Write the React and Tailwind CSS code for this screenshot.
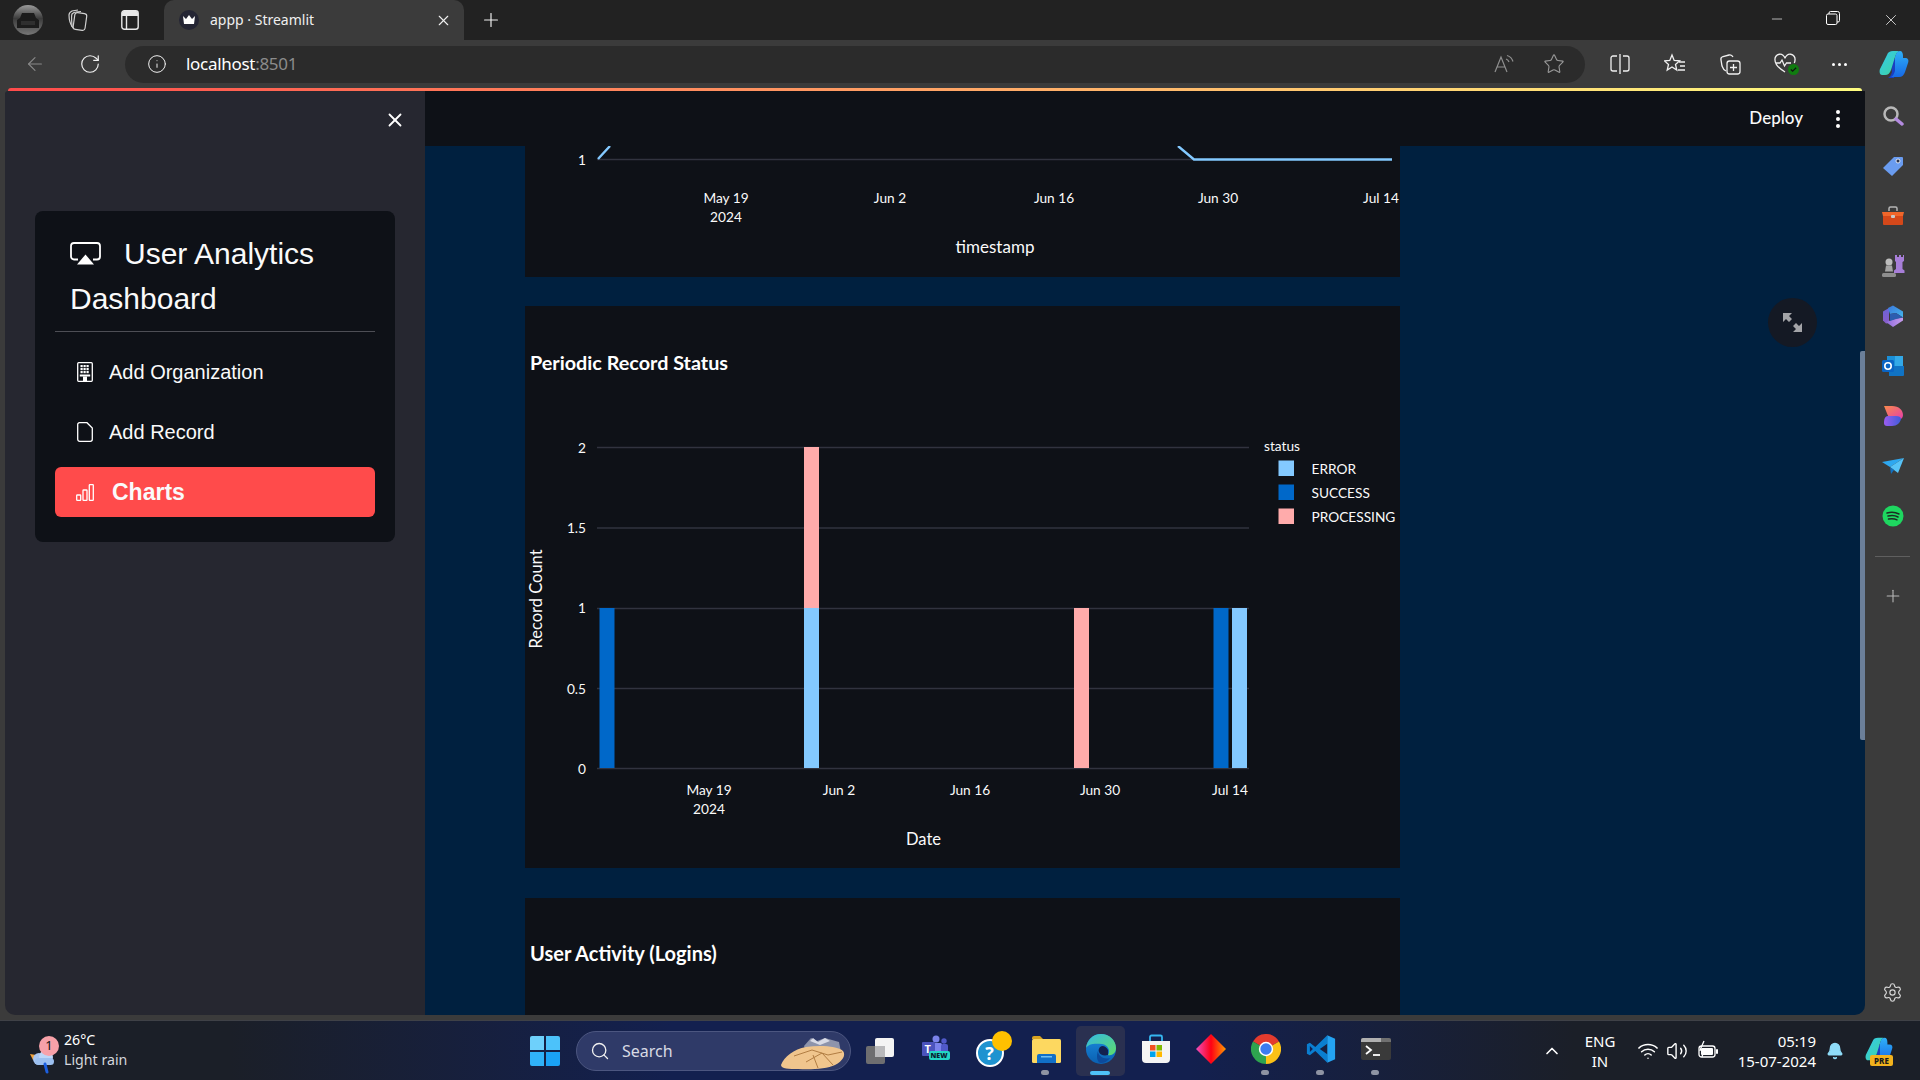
import React from "react";
import { ArrowLeft, RotateCw, Info, Star, X, Plus, Minus, Search, Settings, ChevronUp, Wifi, Volume2, Bell } from "lucide-react";

const S = ({ w = 24, h, vb = "0 0 24 24", children, className = "" }) => (
  <svg width={w} height={h || w} viewBox={vb} fill="none" className={`shrink-0 ${className}`}>{children}</svg>
);

const Airplay = () => (
  <S w={31} h={23} vb="0 0 31 23" className="inline-block align-[-1px]">
    <path d="M8 17.500H4a3 3 0 0 1-3-3V4a3 3 0 0 1 3-3h23a3 3 0 0 1 3 3v10.500a3 3 0 0 1-3 3h-4" stroke="#fff" strokeWidth="1.800" />
    <path d="M15.500 12.500L24 22.500H7Z" fill="#fff" />
  </S>
);
const Building = () => (
  <S w={16} h={20} vb="0 0 16 20">
    <rect x=".7" y=".7" width="14.600" height="18.600" rx="1" stroke="#fff" strokeWidth="1.300" />
    {[3.500, 6.500, 9.500].map((x) => [3, 6, 9].map((y) => <rect key={`${x}${y}`} x={x} y={y} width="2.200" height="2.200" fill="#fff" />))}
    <rect x="2.800" y="12.500" width="10.400" height="2" fill="#fff" />
    <rect x="6" y="14.500" width="4" height="5" fill="#fff" />
  </S>
);
const FileI = () => (
  <S w={16} h={20} vb="0 0 16 20">
    <path d="M2.500.7H10l5.300 5.300v11.300a2 2 0 0 1-2 2H2.700a2 2 0 0 1-2-2V2.500a1.800 1.800 0 0 1 1.800-1.800Z" stroke="#fff" strokeWidth="1.300" />
  </S>
);
const Bars = () => (
  <S w={18} h={17} vb="0 0 18 17">
    <rect x=".7" y="11" width="4" height="5.300" rx=".6" stroke="#fff" strokeWidth="1.300" />
    <rect x="7" y="6" width="4" height="10.300" rx=".6" stroke="#fff" strokeWidth="1.300" />
    <rect x="13.300" y=".7" width="4" height="15.600" rx=".6" stroke="#fff" strokeWidth="1.300" />
  </S>
);

const Copilot = ({ size = 30 }) => (
  <S w={size} vb="0 0 30 30">
    <defs>
      <linearGradient id="cpA" x1="0" y1="0" x2="1" y2="1"><stop offset="0" stopColor="#35c8ee" /><stop offset="1" stopColor="#3ed69a" /></linearGradient>
      <linearGradient id="cpB" x1="0" y1="0" x2="0" y2="1"><stop offset="0" stopColor="#2fb0f7" /><stop offset="1" stopColor="#1769e6" /></linearGradient>
    </defs>
    <path d="M11 10h9l-5 19H9c2-1 3-3 4-6Z" fill="#1a3fc0" />
    <path d="M8 6c1-3 3-4 6-4h6c-2 1-3 3-4 6l-4 13c-1 3-3 5-6 5H3C1 26 0 23 1 20Z" fill="url(#cpA)" />
    <path d="M16 8c1-3 2-6 5-6 2 0 3 2 3 5v2h2c3 0 4 2 3 5l-3 9c-1 3-3 5-6 5h-8c2-1 3-3 4-6Z" fill="url(#cpB)" />
  </S>
);

/* ---------- right rail icons ---------- */
const Tag = () => (
  <S w={22} vb="0 0 22 22">
    <path d="M1 13L12 2h8a1 1 0 0 1 1 1v7L10 21Z" fill="#6a9cf0" />
    <circle cx="16" cy="6" r="2" fill="#2a3550" stroke="#fff" strokeWidth=".8" />
  </S>
);
const Toolbox = () => (
  <S w={22} vb="0 0 22 22">
    <path d="M7 6V3.500A1.500 1.500 0 0 1 8.500 2h5A1.500 1.500 0 0 1 15 3.500V6" stroke="#b5b5b5" strokeWidth="1.500" />
    <path d="M0 7h22l-1 4H1Z" fill="#f0662a" />
    <path d="M1 11h20v8a1 1 0 0 1-1 1H2a1 1 0 0 1-1-1Z" fill="#d4481a" />
    <rect x="9" y="10" width="4" height="3" rx="1" fill="#c9c9c9" />
  </S>
);
const Chess = () => (
  <S w={24} vb="0 0 24 24">
    <circle cx="8" cy="8" r="3.500" fill="#bdbdbd" />
    <path d="M5 11.500h6l1 6H4Z" fill="#a5a5a5" />
    <rect x="1" y="19" width="14" height="4" rx="1.500" fill="#8e8e8e" />
    <path d="M14 1h2v2h2V1h2v2h2V1h1v6l-1.500 1v7l2 1.500V19H13v-2.500l2-1.500V8l-1-1Z" fill="#a77ed8" />
  </S>
);
const M365 = () => (
  <S w={22} vb="0 0 22 22">
    <defs>
      <linearGradient id="m1" x1="0" y1="0" x2="0" y2="1"><stop offset="0" stopColor="#6a63d8" /><stop offset="1" stopColor="#8a5cc8" /></linearGradient>
      <linearGradient id="m2" x1="0" y1="0" x2="1" y2="1"><stop offset="0" stopColor="#3a78dc" /><stop offset="1" stopColor="#45b6ec" /></linearGradient>
      <linearGradient id="m3" x1="0" y1="0" x2="1" y2="0"><stop offset="0" stopColor="#8d6bdc" /><stop offset="1" stopColor="#c79cec" /></linearGradient>
    </defs>
    <path d="M1 6.500L7 3v15l-3 0.500-3-3Z" fill="url(#m1)" />
    <path d="M6 3l5-2.500L21 6.500v6L14 8 8 9Z" fill="url(#m2)" />
    <path d="M4 17l10-3.500 7-1v3l-10 6.500Z" fill="url(#m3)" />
    <path d="M8 9l6-1 7 4.500-7 1.500-6 2Z" fill="#2c5db0" />
  </S>
);
const Outlook = () => (
  <S w={22} vb="0 0 22 22">
    <rect x="5" y="1" width="16" height="10" fill="#1a8fd8" />
    <rect x="13" y="1" width="8" height="10" fill="#33a9e8" />
    <path d="M7 11h15v9a1 1 0 0 1-1 1H7Z" fill="#1073c4" />
    <rect x="0" y="5" width="12" height="12" rx="1.500" fill="#0a64c4" />
    <circle cx="6" cy="11" r="3.200" stroke="#fff" strokeWidth="1.600" />
  </S>
);
const Designer = () => (
  <S w={22} vb="0 0 22 22">
    <defs>
      <linearGradient id="d1" x1="0" y1="0" x2="1" y2="1"><stop offset="0" stopColor="#f98a4b" /><stop offset="1" stopColor="#e63fa8" /></linearGradient>
      <linearGradient id="d2" x1="0" y1="0" x2="1" y2="0"><stop offset="0" stopColor="#9b5cf0" /><stop offset="1" stopColor="#3f5cd8" /></linearGradient>
    </defs>
    <path d="M2 1h8c7 0 11 4 11 9 0 2-1 3-2 4H10C6 14 4 5 2 1Z" fill="url(#d1)" />
    <path d="M6 11h8c3 0 5 1 5 3-1 4-4 7-9 7H5c-2 0-3-1-3-3 0-4 1-7 4-7Z" fill="url(#d2)" />
  </S>
);
const Plane = () => (
  <S w={22} vb="0 0 22 22">
    <path d="M0 7L22 3 8 12Z" fill="#2ea8f0" />
    <path d="M22 3L16 18 8 12Z" fill="#57c3f7" />
    <path d="M8 12l1 7 3-4Z" fill="#1170c0" />
  </S>
);
const Spotify = () => (
  <S w={22} vb="0 0 22 22">
    <circle cx="11" cy="11" r="10.500" fill="#1ed760" />
    <path d="M5 8c4-1 8-1 12 1M6 11c3-.8 7-.8 10 1M6.500 14c3-.6 6-.5 8.500 .8" stroke="#1c2b22" strokeWidth="1.500" strokeLinecap="round" />
  </S>
);
const RailSearch = () => (
  <S w={22} vb="0 0 22 22">
    <circle cx="9" cy="9" r="6.500" stroke="#b8b8b8" strokeWidth="2.500" />
    <path d="M14 14l6 5" stroke="#b48be0" strokeWidth="3.500" strokeLinecap="round" />
  </S>
);

/* ---------- taskbar icons ---------- */
const Teams = () => (
  <div className="relative h-[30px] w-[30px]">
    <S w={30} vb="0 0 30 30">
      <circle cx="15" cy="5" r="3.500" fill="#7b83eb" />
      <circle cx="23" cy="7" r="2.700" fill="#5059c9" />
      <rect x="12" y="9" width="9" height="15" rx="1.500" fill="#7b83eb" />
      <rect x="20" y="10" width="7" height="13" rx="2" fill="#5059c9" />
      <rect x="1" y="8" width="13" height="14" rx="1" fill="#4b53bc" />
    </S>
    <span className="absolute left-[4px] top-[8px] font-['Open_Sans',sans-serif] text-[11px] font-bold leading-[14px] text-white">T</span>
    <span className="absolute left-[8px] top-[17px] h-[9px] w-[21px] rounded-[2px] bg-[#23d4c4] text-center font-['Open_Sans',sans-serif] text-[7px] font-extrabold leading-[9px] text-[#0a2030]">NEW</span>
  </div>
);
const Help = () => (
  <div className="relative h-[30px] w-[30px]">
    <div className="absolute left-0 top-[5px] h-[28px] w-[28px] rounded-full border-[2px] border-white bg-[#1e93d0] text-center font-['Open_Sans',sans-serif] text-[18px] font-bold leading-[24px] text-white">?</div>
    <div className="absolute left-[16px] top-[-3px] h-[20px] w-[20px] rounded-full bg-[#ffc000]" />
  </div>
);
const Explorer = () => (
  <S w={30} vb="0 0 30 30">
    <path d="M1 4a2 2 0 0 1 2-2h6l3 3h-11Z" fill="#d9a321" />
    <rect x="1" y="5" width="29" height="24" rx="1.500" fill="#fdd860" />
    <path d="M6 29v-7a2 2 0 0 1 2-2h15a2 2 0 0 1 2 2v7Z" fill="#1170c8" />
    <rect x="10" y="22" width="11" height="1.500" fill="#6fc0f4" />
  </S>
);
const Edge = () => (
  <S w={30} vb="0 0 30 30">
    <defs>
      <linearGradient id="e1" x1="0" y1="0" x2="1" y2="1"><stop offset="0" stopColor="#35b8e4" /><stop offset="1" stopColor="#5fdc6a" /></linearGradient>
      <linearGradient id="e2" x1="0" y1="0" x2="0" y2="1"><stop offset="0" stopColor="#1a8ce0" /><stop offset="1" stopColor="#0a5fb0" /></linearGradient>
    </defs>
    <circle cx="15" cy="15" r="15" fill="url(#e2)" />
    <path d="M0 14C1 6 7 0 15 0c8 0 15 6 15 14 0 5-4 8-8 7 3-4 0-10-6-11C8 9 2 10 0 14Z" fill="url(#e1)" />
    <path d="M22 21c-4 1-8 0-9-3-1-2 0-5 3-6 3 0 5 2 6 4 0 1 0 3 0 5Z" fill="#13204f" />
    <path d="M12 17c0 5 6 9 12 7-2 3-6 5-9 5-4 0-5-7-3-12Z" fill="#0c4a9c" />
  </S>
);
const Store = () => (
  <S w={30} vb="0 0 30 30">
    <path d="M9 7V3a1.500 1.500 0 0 1 1.500-1.500h9A1.500 1.500 0 0 1 21 3v4" stroke="#35b6f0" strokeWidth="1.800" />
    <path d="M1 7h28v18a4 4 0 0 1-4 4H5a4 4 0 0 1-4-4Z" fill="#f4f4f4" />
    <rect x="9" y="11" width="5.500" height="5.500" fill="#f25022" />
    <rect x="15.500" y="11" width="5.500" height="5.500" fill="#7fba00" />
    <rect x="9" y="17.500" width="5.500" height="5.500" fill="#00a4ef" />
    <rect x="15.500" y="17.500" width="5.500" height="5.500" fill="#ffb900" />
  </S>
);
const Diamond = () => (
  <S w={30} vb="0 0 30 30">
    <defs>
      <linearGradient id="dm" x1="0" y1="0" x2="1" y2="0"><stop offset="0" stopColor="#f04fc0" /><stop offset=".5" stopColor="#ff0014" /><stop offset="1" stopColor="#ff9a00" /></linearGradient>
    </defs>
    <path d="M15 0L30 15 15 30 0 15Z" fill="url(#dm)" />
  </S>
);
const Chrome = () => (
  <S w={30} vb="0 0 30 30">
    <path d="M15 15L28 7.500A15 15 0 0 0 2 7.500Z" fill="#e33b2e" />
    <path d="M15 15L2 7.500A15 15 0 0 0 15 30Z" fill="#2ea44f" />
    <path d="M15 15L15 30A15 15 0 0 0 28 7.500Z" fill="#fbc116" />
    <circle cx="15" cy="15" r="7.200" fill="#fff" />
    <circle cx="15" cy="15" r="5.700" fill="#3b7cf0" />
  </S>
);
const VSCode = () => (
  <S w={30} vb="0 0 100 100">
    <path d="M71 4L31 43 13 29 3 34V66L13 71 31 57 71 96 72 68 46 50 72 32Z" fill="#0a7ed0" />
    <path d="M13 40L23 50 13 60Z" fill="#13204f" />
    <path d="M71 4L97 16V84L71 96Z" fill="#24a3f2" />
  </S>
);
const Terminal = () => (
  <S w={30} vb="0 0 30 30">
    <rect x="0" y="4" width="30" height="22" rx="2" fill="#3a3a3a" />
    <path d="M0 6a2 2 0 0 1 2-2h18v4H0Z" fill="#b0b0b0" />
    <path d="M20 4h8a2 2 0 0 1 2 2v2H20Z" fill="#707070" />
    <path d="M5 12l5 4-5 4" stroke="#fff" strokeWidth="1.800" />
    <path d="M12 21h7" stroke="#fff" strokeWidth="1.800" />
  </S>
);
const Battery = () => (
  <S w={22} vb="0 0 22 22">
    <rect x="2" y="6" width="16" height="11" rx="2.500" stroke="#fff" strokeWidth="1.300" />
    <rect x="4" y="8" width="12" height="7" rx="1" fill="#fff" />
    <rect x="19" y="9" width="2" height="5" rx="1" fill="#fff" />
    <path d="M7 1L3 10h4l-2 7" stroke="#fff" strokeWidth="1.300" />
  </S>
);

const Weather = () => (
  <S w={30} vb="0 0 30 30">
    <path d="M2 10l6 1-3 5Z" fill="#f0a23c" />
    <circle cx="11" cy="15" r="6" fill="#a8c6f2" />
    <circle cx="18" cy="13" r="7" fill="#bcd6f8" />
    <rect x="7" y="14" width="19" height="7" rx="3.500" fill="#9cc0f0" />
    <path d="M17 20l2 8" stroke="#1c5fe0" strokeWidth="3" strokeLinecap="round" />
  </S>
);
const HandPic = () => (
  <S w={68} h={38} vb="0 0 68 38" className="ml-auto">
    <path d="M24 14l7-8 6 3 8-3 7 2 7 2 2 10H26Z" fill="#8e94ab" />
    <path d="M30 9l3-3 5 4 7-4 5 3-10 4Z" fill="#d9dbe6" />
    <path d="M1 33c3-8 13-16 25-18 14-2 32-1 37 4 3 4 0 10-8 14-8 4-25 5-37 4C9 37 1 37 1 33Z" fill="#f0c58d" />
    <path d="M14 24l18-6 16 5 14-3M26 30l16-9 11 12M38 36l-5-13" stroke="#b17d43" strokeWidth="1" />
  </S>
);

const Slot = ({ dot, active, children }) => (
  <div className="relative flex h-[50px] w-[55px] items-center justify-center">
    {active && <div className="absolute left-[3px] top-0 h-[50px] w-[49px] rounded-[5px] bg-[#2a3050]" />}
    <div className="relative -mt-[4px]">{children}</div>
    {dot && <div className="absolute bottom-[1px] left-[23px] h-[5px] w-[8px] rounded-full bg-[#8f94a3]" />}
    {active && <div className="absolute bottom-[1px] left-[17px] h-[4px] w-[20px] rounded-full bg-[#4fc1f7]" />}
  </div>
);

/* ---------- charts ---------- */
const tick = { fill: "#fafafa", fontSize: 13.700 };

const TopChart = () => (
  <svg viewBox="525 146 875 131" className="block h-full w-full font-['Lato',sans-serif]">
    <path d="M597 159.500H1194" stroke="#31333f" strokeWidth="1.500" />
    <path d="M598 159L610 146M1178 146L1194 159.500H1392" stroke="#83c9ff" strokeWidth="2.400" fill="none" />
    <text x="586" y="165" textAnchor="end" {...tick}>1</text>
    {[["May 19", 726], ["Jun 2", 890], ["Jun 16", 1054], ["Jun 30", 1218], ["Jul 14", 1381]].map(([t, x]) => (
      <text key={t} x={x} y="203" textAnchor="middle" {...tick}>{t}</text>
    ))}
    <text x="726" y="222" textAnchor="middle" {...tick}>2024</text>
    <text x="995" y="253" textAnchor="middle" fill="#fafafa" fontSize="17">timestamp</text>
  </svg>
);

const StatusChart = () => (
  <svg viewBox="525 306 875 562" className="block h-full w-full font-['Lato',sans-serif]">
    <text x="530" y="370" fill="#fff" fontSize="19.800" fontWeight="700">Periodic Record Status</text>
    {[447.500, 528, 608.500, 688.500, 768.500].map((y) => (
      <path key={y} d={`M597 ${y}H1249`} stroke="#31333f" strokeWidth="1.500" />
    ))}
    {[["2", 448], ["1.5", 528], ["1", 608], ["0.5", 689], ["0", 769]].map(([t, y]) => (
      <text key={t} x="586" y={y + 5} textAnchor="end" {...tick}>{t}</text>
    ))}
    <rect x="599.500" y="608" width="15" height="160" fill="#0068c9" />
    <rect x="804" y="447" width="15" height="161" fill="#ffabab" />
    <rect x="804" y="608" width="15" height="160" fill="#83c9ff" />
    <rect x="1074" y="608" width="15" height="160" fill="#ffabab" />
    <rect x="1213.500" y="608" width="15" height="160" fill="#0068c9" />
    <rect x="1232" y="608" width="15" height="160" fill="#83c9ff" />
    {[["May 19", 709], ["Jun 2", 839], ["Jun 16", 970], ["Jun 30", 1100], ["Jul 14", 1230]].map(([t, x]) => (
      <text key={t} x={x} y="795" textAnchor="middle" {...tick}>{t}</text>
    ))}
    <text x="709" y="814" textAnchor="middle" {...tick}>2024</text>
    <text x="923.500" y="845" textAnchor="middle" fill="#fafafa" fontSize="16.500">Date</text>
    <text transform="translate(542 599) rotate(-90)" textAnchor="middle" fill="#fafafa" fontSize="16.500">Record Count</text>
    <text x="1264" y="451" {...tick}>status</text>
    {[["ERROR", 468, "#83c9ff"], ["SUCCESS", 492, "#0068c9"], ["PROCESSING", 516, "#ffabab"]].map(([t, y, c]) => (
      <g key={t}>
        <rect x="1278.500" y={y - 7.500} width="15.500" height="15.500" fill={c} />
        <text x="1311.500" y={y + 6} {...tick}>{t}</text>
      </g>
    ))}
  </svg>
);

const RailItem = ({ children }) => <div className="flex h-[50px] items-center justify-center">{children}</div>;

export default function App() {
  return (
    <div className="flex h-screen w-[1920px] flex-col overflow-hidden bg-[#3b3b3b] font-['Noto_Sans',sans-serif] text-white">
      {/* tab strip */}
      <div className="flex h-10 shrink-0 items-center bg-[#222222]">
        <div className="ml-[13px] h-[30px] w-[30px] overflow-hidden rounded-full bg-[linear-gradient(#9a9a9a,#3c3c3c_45%,#777)]">
          <S w={30} vb="0 0 30 30">
            <path d="M7 13l2-5h12l2 5 3 2v8H4v-8Z" fill="#1c1c1c" />
            <rect x="8" y="16" width="14" height="4" fill="#2f2f2f" />
          </S>
        </div>
        <S w={24} className="ml-[22px]" vb="0 0 24 24">
          <rect x="9" y="5" width="12" height="17" rx="2.500" stroke="#d0d0d0" strokeWidth="1.200" transform="rotate(8 15 13)" />
          <path d="M8 20C5 16 4 10 4 7c0-2 1-3 3-4l6-1" stroke="#d0d0d0" strokeWidth="1.200" />
          <path d="M7 19C7 15 6 9 7 6c1-1 2-2 4-2l5-.500" stroke="#d0d0d0" strokeWidth="1.200" />
        </S>
        <S w={18} h={20} vb="0 0 18 20" className="ml-[32px] mr-[3px]">
          <rect x=".8" y=".8" width="16.400" height="18.400" rx="2.500" stroke="#e8e8e8" strokeWidth="1.400" />
          <path d="M1 6h16V3a2 2 0 0 0-2-2H3a2 2 0 0 0-2 2Z" fill="#e8e8e8" />
          <path d="M5.500 6v13" stroke="#e8e8e8" strokeWidth="1.400" />
        </S>
        <div className="ml-[22px] flex h-10 w-[300px] items-center rounded-t-[10px] bg-[#3b3b3b] pl-[15px] pr-[12px]">
          <div className="flex h-[20px] w-[20px] items-center justify-center rounded-full bg-[#242534]">
            <S w={14} vb="0 0 14 14"><path d="M1 3l3 3 3-4 3 4 3-3-1 8H2Z" fill="#fff" /></S>
          </div>
          <span className="ml-[11px] text-[14px] leading-5 text-[#f0f0f0]">appp · Streamlit</span>
          <X size={17} strokeWidth={1.600} color="#f0f0f0" className="ml-auto" />
        </div>
        <Plus size={22} strokeWidth={1.300} color="#f0f0f0" className="ml-[16px]" />
        <div className="ml-auto flex">
          <div className="flex w-[56px] justify-center"><Minus size={16} strokeWidth={1} color="#fff" /></div>
          <div className="flex w-[56px] justify-center">
            <S w={14} vb="0 0 14 14"><rect x=".5" y="3" width="10.500" height="10.500" rx="1.500" stroke="#fff" /><path d="M3 3V2a1.500 1.500 0 0 1 1.500-1.500h7A2 2 0 0 1 13.500 2.500v7A1.500 1.500 0 0 1 12 11h-1" stroke="#fff" /></S>
          </div>
          <div className="flex w-[59px] justify-center"><X size={18} strokeWidth={1} color="#fff" /></div>
        </div>
      </div>

      {/* toolbar */}
      <div className="flex h-12 shrink-0 items-center bg-[#3b3b3b]">
        <ArrowLeft size={22} strokeWidth={1.200} color="#8a8a8a" className="ml-[24px]" />
        <RotateCw size={22} strokeWidth={1.300} color="#f0f0f0" className="ml-[33px]" />
        <div className="ml-[24px] flex h-[37px] w-[1460px] items-center rounded-full bg-[#2b2b2b] pl-[22px] pr-[20px]">
          <Info size={20} strokeWidth={1.200} color="#f0f0f0" />
          <span className="ml-[19px] text-[17px] leading-6 tracking-[-0.3px]">localhost<span className="text-[#8c8c8c]">:8501</span></span>
          <S w={22} className="ml-auto" vb="0 0 22 22">
            <path d="M2 19L8 4l6 15M4.500 14h7" stroke="#8f8f8f" strokeWidth="1.200" />
            <path d="M13 6a5 5 0 0 1 3 3M14 2.500a9 9 0 0 1 6 6" stroke="#8f8f8f" strokeWidth="1.200" />
          </S>
          <Star size={22} strokeWidth={1.200} color="#9a9a9a" className="ml-[28px]" />
        </div>
        <div className="ml-[7px] flex items-center">
          <div className="flex w-[55px] items-center justify-center">
            <S w={22} vb="0 0 22 22"><path d="M8 3H4a2 2 0 0 0-2 2v11a2 2 0 0 0 2 2h4M14 3h4a2 2 0 0 1 2 2v11a2 2 0 0 1-2 2h-4M11 1v20" stroke="#f0f0f0" strokeWidth="1.300" /></S>
          </div>
          <div className="flex w-[55px] items-center justify-center">
            <S w={22} vb="0 0 22 22"><path d="M8 2l2.200 5.500 5.300.4-4 3.500 1.300 5.600L8 14l-4.800 3 1.300-5.600-4-3.500 5.300-.4ZM15 9h6M16 13h5M14 17h7" stroke="#f0f0f0" strokeWidth="1.300" /></S>
          </div>
          <div className="flex w-[55px] items-center justify-center">
            <S w={22} vb="0 0 22 22"><rect x="8" y="8" width="13" height="13" rx="2.500" stroke="#f0f0f0" strokeWidth="1.300" /><path d="M14.500 11v7M11 14.500h7" stroke="#f0f0f0" strokeWidth="1.300" /><path d="M7 18c-2-1-3-2-4-5L2 7c-.5-2 .5-3 2-3.500L10 2c2-.5 3 0 4 2" stroke="#f0f0f0" strokeWidth="1.300" /></S>
          </div>
          <div className="relative flex w-[55px] items-center justify-center">
            <S w={22} vb="0 0 22 22"><path d="M11 19C6 16 1 12 1 7a5 5 0 0 1 10-1.500A5 5 0 0 1 21 7c0 1-.2 2-.7 3M1.500 10H6l2-3 2.500 6 2-3H17" stroke="#f0f0f0" strokeWidth="1.300" /></S>
            <div className="absolute left-[31px] top-[11px] flex h-[11px] w-[11px] items-center justify-center rounded-full bg-[#107c10]">
              <S w={7} vb="0 0 8 8"><path d="M1 4l2 2 4-4" stroke="#111" strokeWidth="1.300" /></S>
            </div>
          </div>
          <div className="flex w-[55px] items-center justify-center gap-[3px]">
            <div className="h-[3px] w-[3px] rounded-full bg-white" /><div className="h-[3px] w-[3px] rounded-full bg-white" /><div className="h-[3px] w-[3px] rounded-full bg-white" />
          </div>
          <div className="ml-[1px] flex w-[52px] items-center justify-center"><Copilot size={30} /></div>
        </div>
      </div>

      {/* middle */}
      <div className="flex min-h-0 flex-1">
        <div className="flex min-w-0 flex-1 flex-col pb-[5px] pl-[5px]">
          <div className="ml-[3px] mr-[3px] h-[3px] shrink-0 rounded-t-[3px] bg-[linear-gradient(90deg,#ff4b4b,#fffd80)]" />
          <div className="flex min-h-0 flex-1 overflow-hidden rounded-b-[10px] rounded-tl-[3px]">
            {/* sidebar */}
            <aside className="w-[420px] shrink-0 bg-[#262730] pl-[30px] pr-[30px] pt-[20px] font-['Liberation_Sans',Arial,sans-serif]">
              <div className="flex h-[18px] justify-end">
                <X size={22} strokeWidth={2} color="#fff" className="-mr-[11px] -mt-[2px]" />
              </div>
              <div className="mt-[82px] h-[331px] w-[360px] rounded-lg bg-[#0e1117] px-5 pt-[20px]">
                <h1 className="ml-[15px] text-[30px] font-normal leading-[45px] text-[#fafafa]">
                  <Airplay /><span className="ml-[23px]">User Analytics</span><br />Dashboard
                </h1>
                <div className="mt-[10px] h-px bg-[#4d4e55]" />
                <nav className="mt-[15px] flex flex-col gap-[10px] text-[20px] text-[#fafafa]">
                  <div className="flex h-[50px] items-center pl-[22px]"><Building /><span className="ml-[16px]">Add Organization</span></div>
                  <div className="flex h-[50px] items-center pl-[22px]"><FileI /><span className="ml-[16px]">Add Record</span></div>
                  <div className="flex h-[50px] items-center rounded-md bg-[#ff4b4b] pl-[21px]"><Bars /><span className="ml-[18px] text-[23px] font-bold">Charts</span></div>
                </nav>
              </div>
            </aside>

            {/* main */}
            <main className="relative flex min-w-0 flex-1 flex-col bg-[#00203f]">
              <header className="flex h-[55px] shrink-0 items-center justify-end bg-[#0e1117] pr-[25px] font-['Lato',sans-serif]">
                <span className="-mt-[2px] text-[17px] font-medium text-[#fafafa]">Deploy</span>
                <div className="ml-[33px] flex flex-col gap-[3px]">
                  <div className="h-[4px] w-[4px] rounded-full bg-white" /><div className="h-[4px] w-[4px] rounded-full bg-white" /><div className="h-[4px] w-[4px] rounded-full bg-white" />
                </div>
              </header>
              <div className="min-h-0 flex-1 overflow-hidden pl-[100px]">
                <section className="h-[131px] w-[875px] bg-[#0e1117]"><TopChart /></section>
                <section className="mt-[29px] h-[562px] w-[875px] bg-[#0e1117]"><StatusChart /></section>
                <section className="mt-[30px] h-[200px] w-[875px] bg-[#0e1117] pl-[5px] pt-[41px] font-['Lato',sans-serif]">
                  <h2 className="text-[20px] font-bold leading-7 text-white">User Activity (Logins)</h2>
                </section>
              </div>
              <div className="absolute left-[1343px] top-[207px] flex h-[49px] w-[49px] items-center justify-center rounded-full bg-[#141924]">
                <S w={19} vb="0 0 19 19">
                  <path d="M0 0h9L6 3l3 3-3 3-3-3-3 3Z" fill="#a3a4a8" />
                  <path d="M19 19h-9l3-3-3-3 3-3 3 3 3-3Z" fill="#a3a4a8" />
                </S>
              </div>
              <div className="absolute right-0 top-[260px] h-[389px] w-[5px] rounded-l-[2px] bg-[#6b7f99]" />
            </main>
          </div>
        </div>

        {/* right rail */}
        <div className="flex w-[55px] shrink-0 flex-col items-stretch pt-[3px]">
          <RailItem><RailSearch /></RailItem>
          <RailItem><Tag /></RailItem>
          <RailItem><Toolbox /></RailItem>
          <RailItem><Chess /></RailItem>
          <RailItem><M365 /></RailItem>
          <RailItem><Outlook /></RailItem>
          <RailItem><Designer /></RailItem>
          <RailItem><Plane /></RailItem>
          <RailItem><Spotify /></RailItem>
          <div className="mx-[10px] mt-[15px] h-px bg-[#5f5f5f]" />
          <div className="mt-[29px] flex justify-center"><Plus size={20} strokeWidth={1.300} color="#b8b8b8" /></div>
          <div className="mt-auto flex justify-center pb-[17px]"><Settings size={21} strokeWidth={1.300} color="#d8d8d8" /></div>
        </div>
      </div>

      {/* taskbar */}
      <div className="flex h-[60px] shrink-0 items-center border-t border-[#3f4147] bg-[linear-gradient(90deg,#1b1f28_0%,#1b1f28_12%,#13204f_35%,#13204f_62%,#1b1f28_82%,#1b1f28_100%)] font-['Noto_Sans',sans-serif]">
        <div className="relative flex w-[514px] shrink-0 items-center pl-[64px]">
          <div className="absolute left-[28px] top-[12px]"><Weather /></div>
          <div className="absolute left-[39px] top-[4px] flex h-[20px] w-[20px] items-center justify-center rounded-full bg-[#f7a1a9] text-[13px] leading-none text-[#111]">1</div>
          <div className="-mt-[2px] text-[14.200px] leading-[20px] text-white">26°C<br /><span className="text-[#d4d6dc]">Light rain</span></div>
        </div>
        <div className="ml-[16px] grid h-[30px] w-[30px] shrink-0 grid-cols-2 gap-[2px]">
          <div className="rounded-tl-[2px] bg-[#6ed0fb]" /><div className="rounded-tr-[2px] bg-[#4cc2fa]" /><div className="rounded-bl-[2px] bg-[#30b2f8]" /><div className="rounded-br-[2px] bg-[#1aa2f5]" />
        </div>
        <div className="ml-[16px] flex h-10 w-[275px] shrink-0 items-center overflow-hidden rounded-full border border-[#4c5680] bg-[#2f3a68] pl-[13px] pr-[2px]">
          <Search size={20} strokeWidth={1.600} color="#f0f0f0" />
          <span className="ml-[12px] text-[16px] text-[#d8dae4]">Search</span>
          <HandPic />
        </div>
        <div className="relative flex w-[57px] shrink-0 justify-center">
          <S w={30} vb="0 0 30 30">
            <rect x="1" y="10" width="19" height="18" rx="2" fill="#6e6e70" />
            <rect x="10" y="2" width="19" height="19" rx="2" fill="#f4f4f4" />
            <rect x="10" y="10" width="10" height="11" fill="#b9b9bb" />
          </S>
        </div>
        <div className="flex shrink-0">
          <Slot><Teams /></Slot>
          <Slot><Help /></Slot>
          <Slot dot><Explorer /></Slot>
          <Slot active><Edge /></Slot>
          <Slot><Store /></Slot>
          <Slot><Diamond /></Slot>
          <Slot dot><Chrome /></Slot>
          <Slot dot><VSCode /></Slot>
          <Slot dot><Terminal /></Slot>
        </div>
        <div className="ml-auto flex items-center text-white">
          <ChevronUp size={20} strokeWidth={2} color="#fff" />
          <div className="ml-[18px] w-[40px] text-center text-[15px] leading-[20px]">ENG<br />IN</div>
          <Wifi size={22} strokeWidth={1.600} color="#fff" className="ml-[17px]" />
          <Volume2 size={22} strokeWidth={1.500} color="#fff" className="ml-[7px]" />
          <div className="ml-[9px]"><Battery /></div>
          <div className="ml-[11px] w-[86px] text-right text-[15px] leading-[20px]">05:19<br />15-07-2024</div>
          <Bell size={18} fill="#8fdcf8" color="#8fdcf8" className="ml-[10px]" />
          <div className="relative ml-[21px] mr-[25px] h-[30px] w-[30px]">
            <Copilot size={28} />
            <span className="absolute left-[5px] top-[19px] h-[11px] w-[23px] rounded-[2px] bg-[#f2b21d] text-center text-[8px] font-extrabold leading-[11px] text-[#1a1a1a]">PRE</span>
          </div>
        </div>
      </div>
    </div>
  );
}
